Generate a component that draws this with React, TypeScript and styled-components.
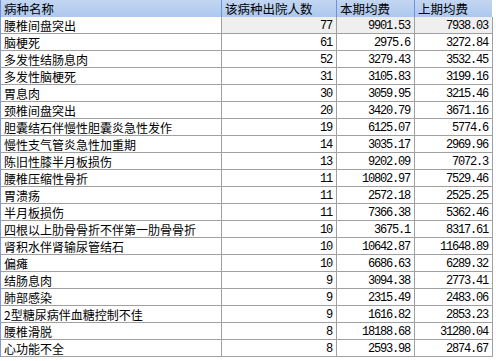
import React from "react";
import styled, { createGlobalStyle } from "styled-components";

const GlobalStyle = createGlobalStyle`
  html, body {
    margin: 0;
    padding: 0;
    background: #ffffff;
  }
  body {
    font-family: "Noto Sans CJK SC", "Noto Sans", sans-serif;
    font-size: 12px;
    color: #000;
  }
`;

const Grid = styled.div`
  display: grid;
  grid-template-columns: 221px 115px 78px 78px;
  grid-auto-rows: 17px;
  width: 493px;
  border-left: 1px solid #7f9bd0;
  box-sizing: border-box;
`;

const HeadCell = styled.div`
  box-sizing: border-box;
  display: flex;
  align-items: center;
  padding-left: 3px;
  background: linear-gradient(#c3d6f2, #adc8ee);
  border-left: 1px solid #6f93d6;
  margin-left: -1px;
  margin-right: 1px;
  white-space: nowrap;
  overflow: hidden;
  line-height: 17px;
  font-size: 12.5px;
`;

const Cell = styled.div<{ $num?: boolean; $shade?: boolean }>`
  box-sizing: border-box;
  display: flex;
  align-items: center;
  justify-content: ${(p) => (p.$num ? "flex-end" : "flex-start")};
  padding: ${(p) => (p.$num ? "1px 4px 0 0" : "0 0 0 3px")};
  border-right: 1px solid #a0a0a0;
  border-bottom: 1px solid #a0a0a0;
  background: ${(p) => (p.$shade ? "#efefef" : "#ffffff")};
  white-space: nowrap;
  overflow: hidden;
  font-family: ${(p) =>
    p.$num
      ? '"Liberation Mono", "DejaVu Sans Mono", monospace'
      : '"Noto Sans CJK SC", "Noto Sans", sans-serif'};
  font-size: ${(p) => (p.$num ? "12px" : "12px")};
  letter-spacing: ${(p) => (p.$num ? "-1.2px" : "0")};
`;

const rows: [string, string, string, string][] = [
  ["腰椎间盘突出", "77", "9901.53", "7938.03"],
  ["脑梗死", "61", "2975.6", "3272.84"],
  ["多发性结肠息肉", "52", "3279.43", "3532.45"],
  ["多发性脑梗死", "31", "3105.83", "3199.16"],
  ["胃息肉", "30", "3059.95", "3215.46"],
  ["颈椎间盘突出", "20", "3420.79", "3671.16"],
  ["胆囊结石伴慢性胆囊炎急性发作", "19", "6125.07", "5774.6"],
  ["慢性支气管炎急性加重期", "14", "3035.17", "2969.96"],
  ["陈旧性膝半月板损伤", "13", "9202.09", "7072.3"],
  ["腰椎压缩性骨折", "11", "10802.97", "7529.46"],
  ["胃溃疡", "11", "2572.18", "2525.25"],
  ["半月板损伤", "11", "7366.38", "5362.46"],
  ["四根以上肋骨骨折不伴第一肋骨骨折", "10", "3675.1", "8317.61"],
  ["肾积水伴肾输尿管结石", "10", "10642.87", "11648.89"],
  ["偏瘫", "10", "6686.63", "6289.32"],
  ["结肠息肉", "9", "3094.38", "2773.41"],
  ["肺部感染", "9", "2315.49", "2483.06"],
  ["2型糖尿病伴血糖控制不佳", "9", "1616.82", "2853.23"],
  ["腰椎滑脱", "8", "18188.68", "31280.04"],
  ["心功能不全", "8", "2593.98", "2874.67"],
];

const headers = ["病种名称", "该病种出院人数", "本期均费", "上期均费"];

export default function App() {
  return (
    <>
      <GlobalStyle />
      <Grid>
        {headers.map((h) => (
          <HeadCell key={h}>{h}</HeadCell>
        ))}
        {rows.map((r, i) =>
          r.map((v, j) => (
            <Cell key={`${i}-${j}`} $num={j > 0} $shade={i === 0 && j > 0}>
              {v}
            </Cell>
          ))
        )}
      </Grid>
    </>
  );
}
